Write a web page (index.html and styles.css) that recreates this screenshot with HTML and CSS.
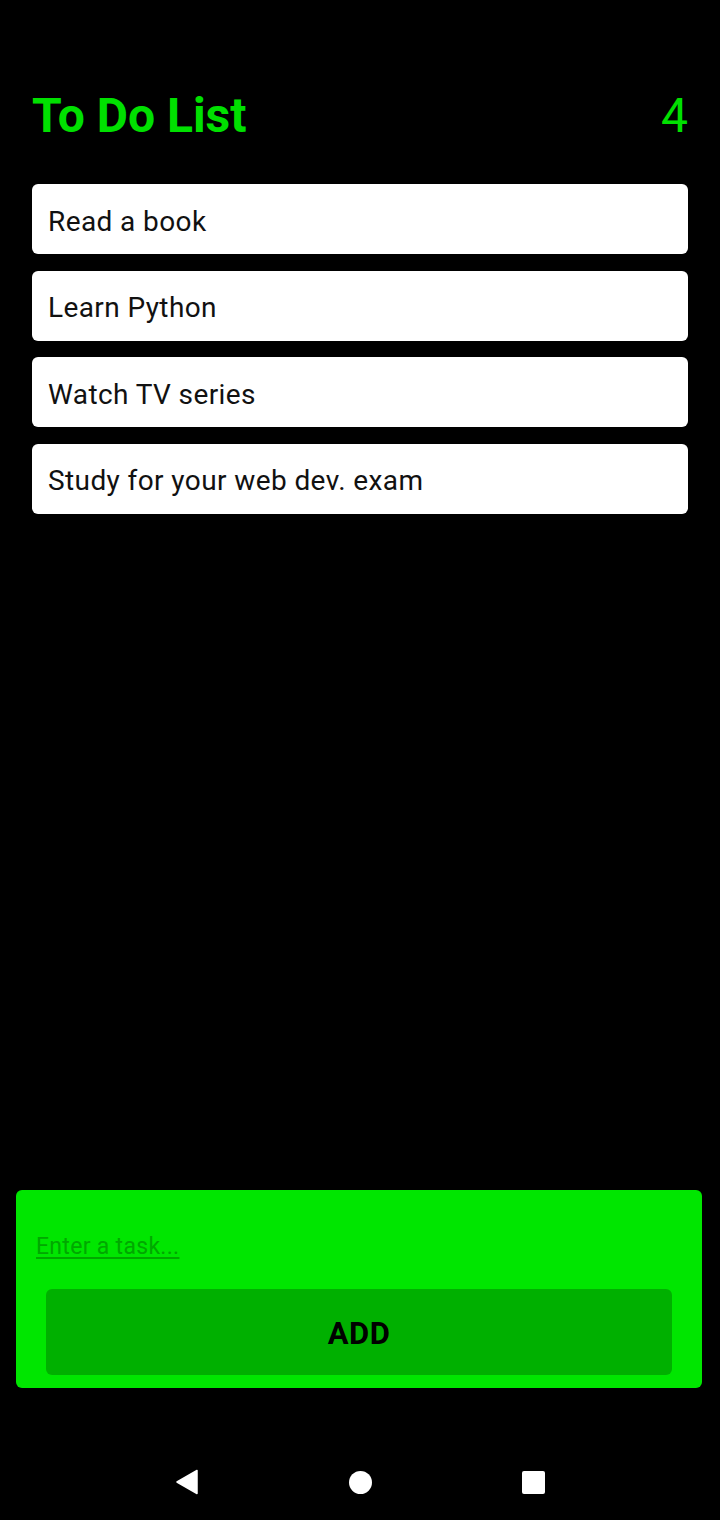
FILE: index.html
```html
<!DOCTYPE html>
<html>
<head>
<meta charset="utf-8">
<title>To Do List</title>
<link rel="stylesheet" href="styles.css">
</head>
<body>
<div class="app">
  <main class="main">
    <header class="header">
      <h1 class="title">To Do List</h1>
      <span class="count">4</span>
    </header>
    <ul class="tasks">
      <li class="task">Read a book</li>
      <li class="task">Learn Python</li>
      <li class="task">Watch TV series</li>
      <li class="task">Study for your web dev. exam</li>
    </ul>
  </main>
  <section class="panel">
    <div class="task-input"><span class="placeholder">Enter a task...</span></div>
    <button class="add-btn">ADD</button>
  </section>
  <nav class="navbar">
    <svg class="nav-icon" width="24" height="26" viewBox="0 0 24 26"><path d="M22 1.5 L2 13 L22 24.5 Z" fill="#fff" stroke="#fff" stroke-width="1.5" stroke-linejoin="round"/></svg>
    <span class="nav-home"></span>
    <span class="nav-recent"></span>
  </nav>
</div>
</body>
</html>
```

FILE: styles.css
```css
html, body {
  margin: 0;
  padding: 0;
  background: #000;
}

body {
  font-family: Roboto, "Noto Sans", sans-serif;
  width: 720px;
  height: 1520px;
  overflow: hidden;
}

.app {
  display: flex;
  flex-direction: column;
  height: 1520px;
}

.main {
  flex: 1;
  padding: 88px 32px 0 32px;
}

.header {
  display: flex;
  justify-content: space-between;
  align-items: baseline;
  height: 56px;
}

.title {
  margin: 0;
  font-size: 48px;
  line-height: 56px;
  font-weight: 700;
  color: #00e000;
}

.count {
  font-size: 48px;
  line-height: 56px;
  font-weight: 400;
  color: #00e000;
}

.tasks {
  list-style: none;
  margin: 40px 0 0 0;
  padding: 0;
  display: flex;
  flex-direction: column;
  gap: 16.5px;
}

.task {
  background: #fff;
  border-radius: 6px;
  height: 70px;
  display: flex;
  align-items: center;
  padding: 4px 16px 0 16px;
  box-sizing: border-box;
  font-size: 28px;
  letter-spacing: 0.4px;
  color: #111;
}

.panel {
  margin: 0 18px 56px 16px;
  background: #00e600;
  border-radius: 6px;
  padding: 42px 30px 13px 30px;
}

.task-input {
  height: 30px;
  line-height: 30px;
  font-size: 23px;
  letter-spacing: 0.3px;
  margin-left: -10px;
  margin-bottom: 27px;
}

.placeholder {
  color: #00a800;
  text-decoration: underline;
  text-underline-offset: 3px;
}

.add-btn {
  display: block;
  width: 100%;
  height: 86px;
  border: none;
  border-radius: 6px;
  background: #00b000;
  font-family: Roboto, "Noto Sans", sans-serif;
  font-size: 31px;
  font-weight: 700;
  letter-spacing: 0.5px;
  color: #000;
  padding: 2px 0 0 0;
}

.navbar {
  height: 76px;
  display: flex;
  justify-content: center;
  align-items: center;
  gap: 150px;
  padding-left: 4px;
}

.nav-icon {
  display: block;
  margin-left: -4px;
}

.nav-home {
  width: 23px;
  height: 23px;
  border-radius: 50%;
  background: #fff;
}

.nav-recent {
  width: 23px;
  height: 23px;
  border-radius: 2px;
  background: #fff;
}
```
